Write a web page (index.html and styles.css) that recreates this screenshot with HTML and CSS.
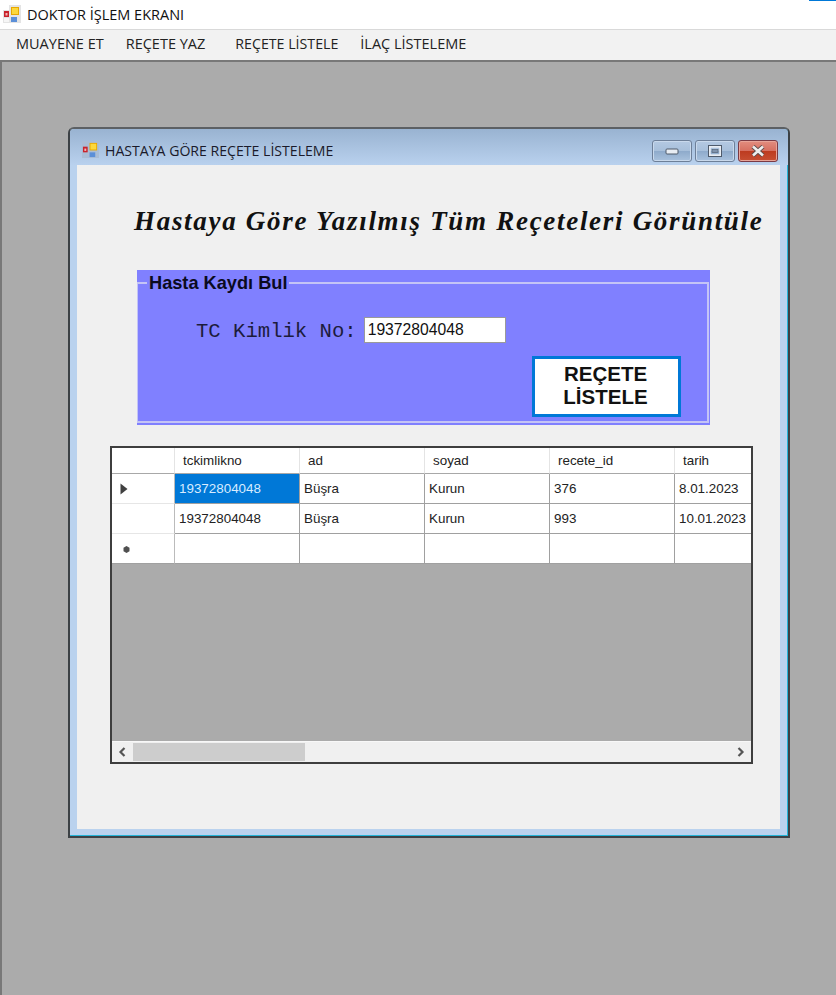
FILE: index.html
```html
<!DOCTYPE html>
<html lang="tr">
<head>
<meta charset="utf-8">
<title>DOKTOR İŞLEM EKRANI</title>
<link rel="stylesheet" href="styles.css">
</head>
<body>
<div class="app">
  <header class="titlebar">
    <svg class="appicon" width="18" height="18" viewBox="0 0 18 18"><rect width="18" height="18" fill="#e4e4e4"/><rect x="0" y="0" width="6" height="5" fill="#fff"/><rect x="1" y="6" width="5" height="6" fill="#c8232c"/><rect x="2.5" y="8" width="2" height="2.5" fill="#f4b6b6"/><rect x="8" y="2" width="8" height="8" fill="#e8a800"/><rect x="9" y="3" width="6" height="6" fill="#fcd83c"/><rect x="8" y="12" width="6" height="5" fill="#5b8fd8"/><rect x="1" y="13" width="5" height="4" fill="#f6f6f6"/></svg>
    <span>DOKTOR İŞLEM EKRANI</span>
    <i class="focus-line"></i>
  </header>
  <nav class="menubar">
    <span class="m1">MUAYENE ET</span>
    <span class="m2">REÇETE YAZ</span>
    <span class="m3">REÇETE LİSTELE</span>
    <span class="m4">İLAÇ LİSTELEME</span>
  </nav>
  <main class="mdi">
    <section class="child">
      <div class="child-title">
        <svg class="appicon small" width="17" height="17" viewBox="0 0 18 18"><rect width="18" height="18" fill="#a9bdd6"/><rect x="1" y="6" width="5" height="6" fill="#c8232c"/><rect x="2.5" y="8" width="2" height="2.5" fill="#f4b6b6"/><rect x="8" y="2" width="8" height="8" fill="#e8a800"/><rect x="9" y="3" width="6" height="6" fill="#fcd83c"/><rect x="8" y="12" width="6" height="5" fill="#5b8fd8"/></svg>
        <span class="child-name">HASTAYA GÖRE REÇETE LİSTELEME</span>
        <div class="controls">
          <div class="ctl"><svg width="14" height="8" viewBox="0 0 14 8"><rect x="1" y="2" width="12" height="5" rx="1" fill="#e8edf3" stroke="#4f5b6b"/></svg></div>
          <div class="ctl"><svg width="14" height="12" viewBox="0 0 14 12"><rect x="1.5" y="1.5" width="11" height="9" fill="none" stroke="#e8edf3" stroke-width="2.4"/><rect x="0.5" y="0.5" width="13" height="11" fill="none" stroke="#4f5b6b"/><rect x="4" y="4.5" width="6" height="3" fill="#7f93ad" stroke="#4f5b6b" stroke-width=".6"/></svg></div>
          <div class="ctl close"><svg width="16" height="12" viewBox="0 0 16 12"><path d="M3 1.5 L13 10.5 M13 1.5 L3 10.5" stroke="#5a4a4a" stroke-width="4.4"/><path d="M3 1.5 L13 10.5 M13 1.5 L3 10.5" stroke="#eee" stroke-width="2.6"/></svg></div>
        </div>
      </div>
      <div class="client">
        <h1 class="heading">Hastaya Göre Yazılmış Tüm Reçeteleri Görüntüle</h1>
        <div class="group">
          <fieldset class="field">
            <legend>Hasta Kaydı Bul</legend>
            <div class="tc-row">
              <label class="tc-label" for="tc">TC Kimlik No:</label>
              <input class="tc-input" id="tc" value="19372804048">
            </div>
            <div class="btn-row"><button class="list-btn">REÇETE<br>LİSTELE</button></div>
          </fieldset>
        </div>
        <div class="grid">
          <div class="rows">
            <div class="row head"><div class="rh"></div><div>tckimlikno</div><div>ad</div><div>soyad</div><div>recete_id</div><div>tarih</div></div>
            <div class="row"><div class="rh"><svg width="8" height="12" viewBox="0 0 8 12"><path d="M0.5 0.5 L7.5 6 L0.5 11.5 Z" fill="#404040"/></svg></div><div class="sel">19372804048</div><div>Büşra</div><div>Kurun</div><div>376</div><div>8.01.2023</div></div>
            <div class="row"><div class="rh"></div><div>19372804048</div><div>Büşra</div><div>Kurun</div><div>993</div><div>10.01.2023</div></div>
            <div class="row new"><div class="rh"><svg width="7" height="7" viewBox="0 0 7 7"><path d="M3.5 0 L6.5 1.7 L6.5 5.3 L3.5 7 L0.5 5.3 L0.5 1.7 Z" fill="#505050"/></svg></div><div></div><div></div><div></div><div></div><div></div></div>
          </div>
          <div class="scrollbar">
            <svg class="arrow" width="8" height="10" viewBox="0 0 8 10"><path d="M6.5 1 L2.5 5 L6.5 9" fill="none" stroke="#555" stroke-width="2.2"/></svg>
            <div class="thumb"></div>
            <svg class="arrow" width="8" height="10" viewBox="0 0 8 10"><path d="M1.5 1 L5.5 5 L1.5 9" fill="none" stroke="#555" stroke-width="2.2"/></svg>
          </div>
        </div>
      </div>
    </section>
  </main>
</div>
</body>
</html>
```
FILE: styles.css
```css
* { box-sizing: border-box; }
html, body { margin: 0; padding: 0; }
body { font-family: "Open Sans", "Liberation Sans", sans-serif; color: #111; overflow: hidden; background: #fff; }
.app { width: 836px; height: 995px; display: flex; flex-direction: column; }

.titlebar { height: 29px; background: #fff; display: flex; align-items: center; padding-left: 3px; gap: 6px; font-size: 14.5px; padding-bottom: 1px; position: relative; }
.focus-line { position: absolute; right: 0; top: 0; width: 27px; height: 1px; background: #0078d7; }
.menubar { height: 31px; background: #f2f2f2; border-top: 1px solid #d9d9d9; display: flex; align-items: center; font-size: 14.5px; color: #222; padding-left: 16px; padding-bottom: 3px; }
.menubar .m2 { margin-left: 22px; }
.menubar .m3 { margin-left: 30px; font-size: 14.2px; }
.menubar .m4 { margin-left: 22px; }

.mdi { flex: 1; position: relative; background: #ababab; border-top: 2px solid #787878; border-left: 2px solid #787878; }
.child { position: absolute; left: 66px; top: 65px; width: 722px; height: 711px; background: #bad2ee; border: 2px solid #3c4145; border-top-color: #5c6064; border-radius: 6px 6px 0 0; box-shadow: inset 0 -1px 0 #24b4d8, inset -1px 0 0 #24b4d8; display: flex; flex-direction: column; }
.child-title { height: 36px; flex: none; display: flex; align-items: center; padding: 0 10px 0 12px; background: linear-gradient(#99b3d1, #b9d1ee); border-radius: 4px 4px 0 0; font-size: 14.1px; color: #1a1a2a; gap: 6px; }
.appicon.small { margin-top: 4px; }
.child-name { margin-top: 7px; }
.controls { margin-left: auto; display: flex; gap: 3px; margin-top: 7px; }
.ctl { width: 40px; height: 22px; border: 1px solid #6d7f98; border-radius: 3px; background: linear-gradient(#b4c9e2 0, #a7bfda 50%, #8eaacb 51%, #a9c2dd 100%); display: flex; align-items: center; justify-content: center; box-shadow: inset 0 0 0 1px #c9d9ec; }
.ctl.close { border-color: #7a3a44; background: linear-gradient(#e28d7f 0, #d66f60 50%, #bd3b20 51%, #c74f33 100%); box-shadow: inset 0 0 0 1px #e7a498; }

.client { flex: 1; margin: 0 8px 7px 7px; background: #f0f0f0; display: flex; flex-direction: column; }
.heading { margin: 37px 0 0 57px; height: 38px; font-family: "Liberation Serif", serif; font-style: italic; font-weight: 700; font-size: 27px; line-height: 38px; color: #111; letter-spacing: 1.7px; white-space: nowrap; }

.group { margin: 30px 0 0 60px; width: 573px; height: 155px; background: #8080ff; padding: 2px 1px 2px 0; flex: none; }
.field { margin: 0; height: 151px; padding: 0; border: 2px solid #c4c4f6; border-left-width: 1.5px; min-width: 0; }
.field legend { margin-left: 9px; padding: 0 2px; font-family: "Liberation Sans", sans-serif; font-weight: 700; font-size: 18.2px; line-height: 22px; color: #0a0a20; }
.tc-row { display: flex; align-items: center; margin: 23px 0 0 58px; }
.tc-label { font-family: "Liberation Mono", monospace; font-size: 20.6px; color: #1c1c3c; margin-right: 7px; white-space: nowrap; padding-top: 2px; }
.tc-input { width: 142px; height: 26px; border: 1px solid #9a9a9a; padding: 1px 3px; font-family: "Liberation Sans", sans-serif; font-size: 15.7px; color: #111; background: #fff; border-radius: 0; outline: none; }
.btn-row { display: flex; justify-content: flex-end; margin: 13px 26px 0 0; }
.list-btn { width: 149px; height: 61px; border: 3px solid #0078d7; background: #fff; padding: 0 2px 3px 0; font-family: "Liberation Sans", sans-serif; font-weight: 700; font-size: 20.5px; line-height: 23px; color: #111; }

.grid { margin: 21px 0 0 33px; width: 643px; height: 318px; flex: none; border: 2px solid #3e3e3e; background: #ababab; display: flex; flex-direction: column; overflow: hidden; font-family: "Liberation Sans", sans-serif; font-size: 13.4px; color: #222; }
.rows { flex: 1; }
.row { display: grid; grid-template-columns: 63px repeat(5, 125px); height: 30px; background: #fff; }
.row > div { border-right: 1px solid #a0a0a0; border-bottom: 1px solid #a0a0a0; padding: 0 4px; display: flex; align-items: center; white-space: nowrap; overflow: hidden; }
.row > .rh { background: #fff; border-right-color: #bbb; border-bottom-color: #e6e6e6; padding: 0 0 0 8px; }
.row.head { height: 26px; }
.row.head > div { padding-left: 8px; border-right-color: #e4e4e4; border-bottom-color: #a8a8a8; }
.row.head > .rh { border-bottom-color: #a8a8a8; }
.row.new > .rh { padding-left: 11px; border-bottom-color: #a0a0a0; padding-top: 2px; }
.row > .sel { background: #0078d7; color: #d9ecff; }
.scrollbar { height: 21px; flex: none; background: #f0f0f0; border-top: 1px solid #f8f8f8; display: flex; align-items: center; padding: 0 6px 0 6px; }
.thumb { width: 172px; height: 18px; margin-left: 7px; background: #cdcdcd; margin-right: auto; }
```
